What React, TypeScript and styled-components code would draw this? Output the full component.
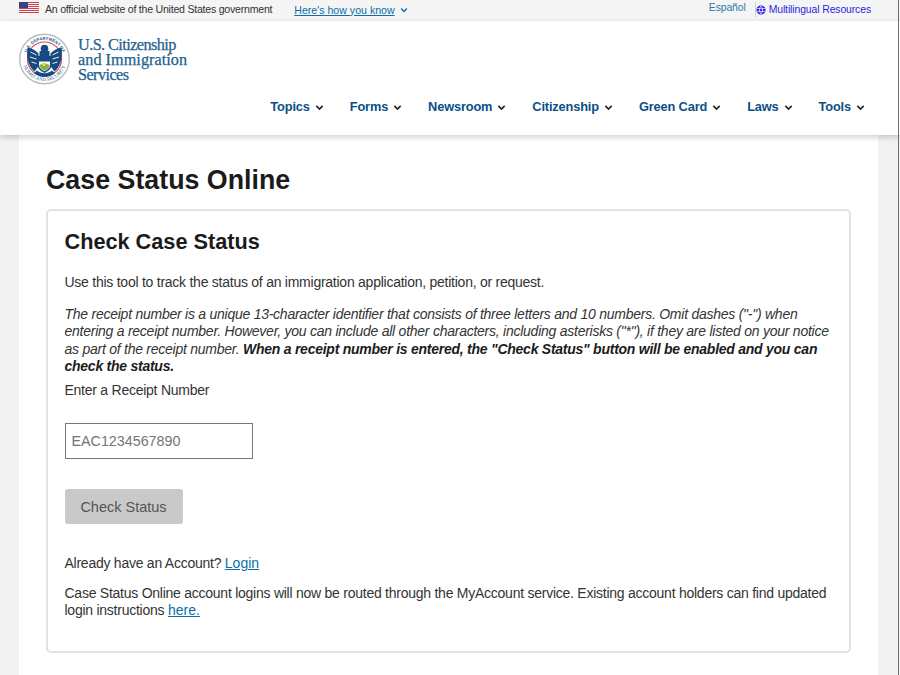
import React from "react";
import styled, { createGlobalStyle } from "styled-components";

const GlobalStyle = createGlobalStyle`
  html, body {
    margin: 0;
    padding: 0;
    height: 675px;
    overflow: hidden;
    background: #f2f2f2;
    font-family: "Liberation Sans", Arial, sans-serif;
  }
`;

const WindowEdge = styled.div`
  position: fixed;
  z-index: 3;
  top: 0;
  bottom: 0;
  right: 1px;
  width: 1.5px;
  background: #6f6f6f;
`;

const TopBar = styled.div`
  height: 21px;
  background: #f5f5f5;
  display: flex;
  justify-content: space-between;
  padding: 0 29px 0 19px;
  font-size: 10.6px;
`;

const OfficialNotice = styled.div`
  display: flex;
  align-items: center;
  height: 17px;
  color: #333;
  letter-spacing: -0.24px;
`;

const FlagIcon = styled.svg`
  width: 20px;
  height: 12px;
  margin-right: 6px;
  margin-top: -1px;
`;

const KnowLink = styled.a`
  display: flex;
  align-items: center;
  gap: 5px;
  margin-left: 22px;
  margin-top: 2px;
  color: #0b6fa8;
  text-decoration: underline;
  letter-spacing: 0;
`;

const LangLinks = styled.div`
  display: flex;
  align-items: flex-start;
  padding-top: 2px;
  font-size: 10.4px;
  letter-spacing: -0.1px;
`;

const Espanol = styled.a`
  color: #2a7ba8;
  padding-right: 9px;
  border-right: 1px solid #d0d0d0;
  height: 15px;
`;

const MultiLink = styled.a`
  display: flex;
  align-items: center;
  gap: 3px;
  color: #2a1fe0;
  height: 13px;
  margin-top: 1px;
`;

const Header = styled.header`
  position: relative;
  z-index: 2;
  height: 114px;
  background: #fff;
  box-shadow: 0 2px 6px rgba(0, 0, 0, 0.2);
  padding: 11px 35px 0 19px;
  box-sizing: border-box;
`;

const Brand = styled.div`
  display: flex;
  align-items: center;
  gap: 8px;
  height: 54px;
`;

const Seal = styled.svg`
  width: 51px;
  height: 54px;
  flex: none;
`;

const BrandName = styled.div`
  font-family: "Liberation Serif", serif;
  font-size: 16.2px;
  line-height: 15px;
  font-weight: 400;
  color: #24618f;
  -webkit-text-stroke: 0.25px #24618f;
  margin-top: 3px;
`;

const BrandLine = styled.div<{ $tight?: boolean }>`
  letter-spacing: ${(p) => (p.$tight ? "-0.55px" : "0.05px")};
`;

const Nav = styled.nav`
  display: flex;
  justify-content: flex-end;
  gap: 26px;
  margin-top: 11px;
`;

const NavItem = styled.a`
  display: flex;
  align-items: center;
  gap: 5px;
  font-size: 12.8px;
  letter-spacing: -0.15px;
  font-weight: 700;
  color: #0b4f86;
  line-height: 20px;
`;

const Page = styled.main`
  margin: 0 22px 0 19px;
  height: 540px;
  background: #fff;
  padding: 0 27px;
  box-sizing: border-box;
  overflow: hidden;
`;

const PageTitle = styled.h1`
  margin: 29px 0 12px;
  font-size: 26.8px;
  line-height: 33px;
  font-weight: 700;
  color: #1b1b1b;
`;

const Card = styled.section`
  height: 444px;
  box-sizing: border-box;
  border: 2px solid #e2e2e6;
  border-radius: 5px;
  padding: 17px 16.5px;
  color: #333;
  font-size: 14px;
  letter-spacing: -0.25px;
  line-height: 17.2px;
`;

const CardTitle = styled.h2`
  margin: 0 0 19px;
  font-size: 21.7px;
  letter-spacing: 0;
  line-height: 27px;
  font-weight: 700;
  color: #1b1b1b;
`;

const Para = styled.p`
  margin: 0 0 13px;
`;

const IntroPara = styled(Para)`
  margin-bottom: 15px;
`;

const FineNote = styled(Para)`
  font-style: italic;
  margin-bottom: 7px;

  b {
    font-weight: 700;
    color: #1b1b1b;
  }
`;

const FieldLabel = styled.label`
  display: block;
  margin-bottom: 24px;
`;

const ReceiptInput = styled.input`
  display: block;
  width: 188px;
  height: 36px;
  box-sizing: border-box;
  border: 1.5px solid #777;
  padding: 0 6px;
  font-family: inherit;
  font-size: 14.3px;
  letter-spacing: 0;
  outline: none;

  &::placeholder {
    color: #757575;
    opacity: 1;
  }
`;

const CheckButton = styled.button`
  display: block;
  width: 118px;
  height: 35px;
  margin: 30px 0 31px;
  border: 0;
  border-radius: 3px;
  background: #c9c9c9;
  color: #555;
  font-family: inherit;
  font-size: 14.5px;
`;

const NoticePara = styled(Para)`
  line-height: 17px;
`;

const TextLink = styled.a`
  color: #0b6fa8;
  text-decoration: underline;
  letter-spacing: 0;
`;

const Chevron = ({ color = "#222", size = 9 }: { color?: string; size?: number }) => (
  <svg width={size} height={size} viewBox="0 0 10 10" fill="none" stroke={color} strokeWidth="1.8">
    <path d="M1.5 3.2 5 6.8l3.5-3.6" />
  </svg>
);

const stripes = [0, 2, 4, 6, 8, 10];

const Flag = () => (
  <FlagIcon viewBox="0 0 20 12">
    <rect width="20" height="12" fill="#f4f4f4" />
    {stripes.map((y) => (
      <rect key={y} y={y} width="20" height="1" fill="#d2404c" />
    ))}
    <rect width="9" height="6" fill="#3b3f86" />
  </FlagIcon>
);

const Globe = () => (
  <svg width="10" height="10" viewBox="0 0 10 10" fill="none">
    <circle cx="5" cy="5" r="4.6" fill="#2a1fe0" />
    <path d="M1 3.6h8M1 6.4h8M5 1c-2 2.4-2 5.6 0 8M5 1c2 2.4 2 5.6 0 8" stroke="#fff" strokeWidth="0.7" />
  </svg>
);

const DhsSeal = () => (
  <Seal viewBox="0 0 51 54">
    <defs>
      <path id="sealTop" d="M6.500 27a19 19 0 0 1 38 0" />
      <path id="sealBottom" d="M3.500 27a22 22 0 0 0 44 0" />
    </defs>
    <circle cx="25.500" cy="27" r="24.800" fill="#fff" stroke="#b9bcbf" strokeWidth="1.400" />
    <text fontFamily="Liberation Sans, sans-serif" fontSize="4.300" fontWeight="700" fill="#2a5f8c" textAnchor="middle">
      <textPath href="#sealTop" startOffset="50%">U.S. DEPARTMENT OF</textPath>
    </text>
    <text fontFamily="Liberation Serif, serif" fontSize="5" fill="#2a5f8c" textAnchor="middle">
      <textPath href="#sealBottom" startOffset="50%">HOMELAND SECURITY</textPath>
    </text>
    <circle cx="25.500" cy="27" r="17" fill="#fff" stroke="#d8434f" strokeWidth="1.100" />
    <path d="M8.500 15.500c4 .5 8 2.500 11 6l.5 12-4.500 6c-6-5-8.500-14-7-24z" fill="#174a80" />
    <path d="M42.500 15.500c-4 .5-8 2.500-11 6l-.5 12 4.500 6c6-5 8.500-14 7-24z" fill="#174a80" />
    <path d="M11.500 20l6 3M11 25l6.500 2M12.500 30l5 1.500M39.500 20l-6 3M40 25l-6.500 2M38.500 30l-5 1.500" stroke="#fff" strokeWidth="0.9" />
    <circle cx="25.500" cy="16.500" r="3.800" fill="#174a80" />
    <rect x="20.500" y="19" width="10" height="6" fill="#174a80" />
    <path d="M18.500 24h14v9c0 3.500-3.500 6.500-7 8-3.500-1.500-7-4.500-7-8z" fill="#174a80" />
    <path d="M20 29.500h11v3.500c0 2.800-3 5-5.500 6.300-2.500-1.300-5.500-3.500-5.500-6.300z" fill="#fff" />
    <path d="M20.500 33c2.500-2 7.500-2.200 10 0 0 2.500-3 4.800-5 5.800-2-1-5-3.300-5-5.800z" fill="#86ad48" />
    <circle cx="25" cy="32.500" r="1.800" fill="#e3cf5a" />
    <path d="M15 41c3 2.500 6.500 4 10.500 4s7.500-1.500 10.500-4l-3-2.500c-2.200 1.700-4.700 2.700-7.500 2.700s-5.300-1-7.500-2.700z" fill="#174a80" />
  </Seal>
);

const navItems = ["Topics", "Forms", "Newsroom", "Citizenship", "Green Card", "Laws", "Tools"];

export default function App() {
  return (
    <>
      <GlobalStyle />
      <WindowEdge />
      <TopBar>
        <OfficialNotice>
          <Flag />
          An official website of the United States government
          <KnowLink>
            Here's how you know
            <Chevron color="#0b6fa8" size={8} />
          </KnowLink>
        </OfficialNotice>
        <LangLinks>
          <Espanol>Español</Espanol>
          <MultiLink>
            <Globe />
            Multilingual Resources
          </MultiLink>
        </LangLinks>
      </TopBar>
      <Header>
        <Brand>
          <DhsSeal />
          <BrandName>
            <BrandLine $tight>U.S. Citizenship</BrandLine>
            <BrandLine>and Immigration</BrandLine>
            <BrandLine $tight>Services</BrandLine>
          </BrandName>
        </Brand>
        <Nav>
          {navItems.map((item) => (
            <NavItem key={item}>
              {item}
              <Chevron />
            </NavItem>
          ))}
        </Nav>
      </Header>
      <Page>
        <PageTitle>Case Status Online</PageTitle>
        <Card>
          <CardTitle>Check Case Status</CardTitle>
          <IntroPara>Use this tool to track the status of an immigration application, petition, or request.</IntroPara>
          <FineNote>
            The receipt number is a unique 13-character identifier that consists of three letters and 10 numbers. Omit
            dashes ("-") when entering a receipt number. However, you can include all other characters, including
            asterisks ("*"), if they are listed on your notice as part of the receipt number.{" "}
            <b>
              When a receipt number is entered, the "Check Status" button will be enabled and you can check the status.
            </b>
          </FineNote>
          <FieldLabel htmlFor="receipt">Enter a Receipt Number</FieldLabel>
          <ReceiptInput id="receipt" placeholder="EAC1234567890" />
          <CheckButton disabled>Check Status</CheckButton>
          <Para>
            Already have an Account? <TextLink>Login</TextLink>
          </Para>
          <NoticePara>
            Case Status Online account logins will now be routed through the MyAccount service. Existing account holders
            can find updated login instructions <TextLink>here.</TextLink>
          </NoticePara>
        </Card>
      </Page>
    </>
  );
}
